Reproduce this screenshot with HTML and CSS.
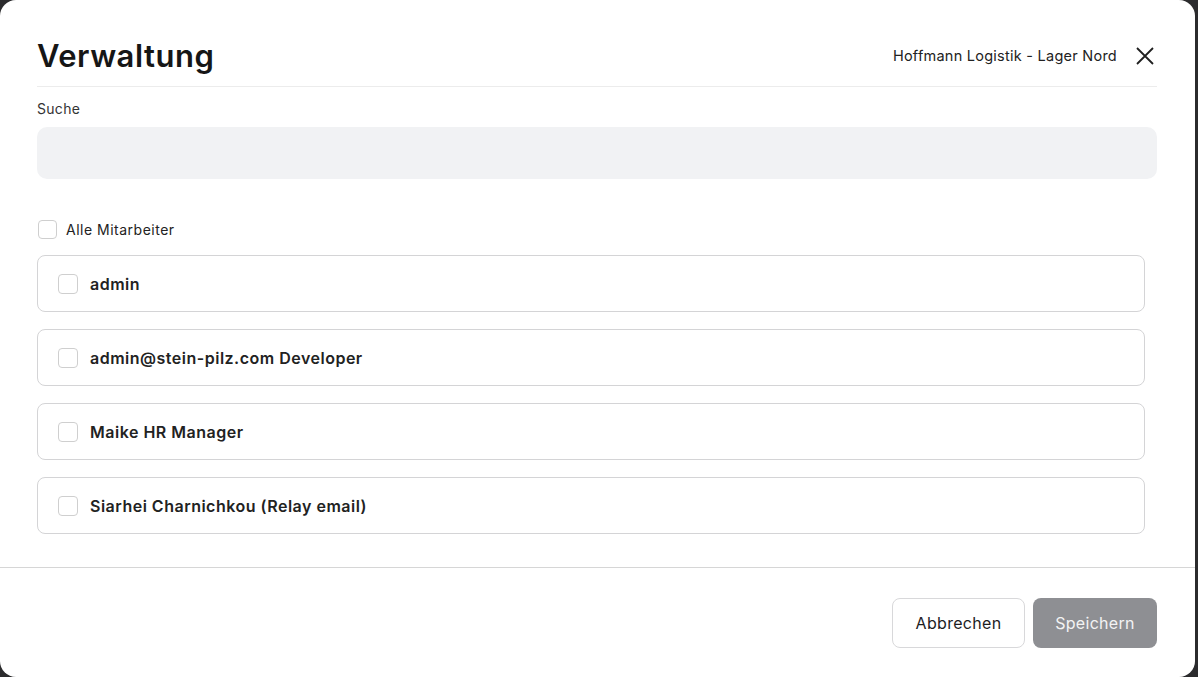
FILE: index.html
```html
<!DOCTYPE html>
<html lang="de">
<head>
<meta charset="UTF-8" />
<title>Verwaltung</title>
<link rel="stylesheet" href="styles.css">
</head>
<body>
<div class="modal">
  <header class="modal-head">
    <h1>Verwaltung</h1>
    <div class="head-right">
      <span class="company">Hoffmann Logistik - Lager Nord</span>
      <button class="close" aria-label="Schließen">
        <svg width="20" height="20" viewBox="0 0 20 20"><path d="M2 2 L18 18 M18 2 L2 18" stroke="#1f1f1f" stroke-width="1.8" fill="none"/></svg>
      </button>
    </div>
  </header>

  <div class="modal-body">
    <label class="field-label" for="search">Suche</label>
    <input id="search" class="search" type="text">

    <label class="all-check">
      <span class="box small"></span>
      Alle Mitarbeiter
    </label>

    <div class="list">
      <div class="item"><span class="box"></span>admin</div>
      <div class="item"><span class="box"></span>admin@stein-pilz.com Developer</div>
      <div class="item"><span class="box"></span>Maike HR Manager</div>
      <div class="item"><span class="box"></span>Siarhei Charnichkou (Relay email)</div>
    </div>
  </div>

  <footer class="modal-foot">
    <button class="btn btn-cancel">Abbrechen</button>
    <button class="btn btn-save" disabled>Speichern</button>
  </footer>
</div>
</body>
</html>
```

FILE: styles.css
```css
* {
  box-sizing: border-box;
}
body {
  margin: 0;
  background: #2b2b2d;
  font-family: Inter, "Open Sans", sans-serif;
  color: #1d1d1f;
  height: 677px;
  overflow: hidden;
}
.modal {
  width: 1195px;
  height: 677px;
  background: #fff;
  border-radius: 16px;
  display: flex;
  flex-direction: column;
}
.modal-head {
  margin: 0 38px 0 37px;
  height: 87px;
  padding-top: 25px;
  border-bottom: 1px solid #ececec;
  display: flex;
  align-items: center;
  justify-content: space-between;
}
.modal-head h1 {
  margin: 0;
  font-size: 31px;
  font-weight: 600;
  letter-spacing: 0.5px;
  color: #161616;
}
.head-right {
  display: flex;
  align-items: center;
  gap: 18px;
}
.company {
  font-size: 14.5px;
  letter-spacing: 0.25px;
  color: #222;
}
.close {
  border: none;
  background: none;
  padding: 0;
  margin-right: 2px;
  width: 20px;
  height: 20px;
  cursor: pointer;
  display: flex;
}
.modal-body {
  padding: 14px 38px 0 37px;
  flex: 1;
}
.field-label {
  display: block;
  font-size: 14px;
  letter-spacing: 0.3px;
  color: #333;
  line-height: 16px;
  margin-bottom: 10px;
}
.search {
  width: 100%;
  height: 52px;
  border: none;
  border-radius: 10px;
  background: #f1f2f4;
  outline: none;
  font: inherit;
  padding: 0 16px;
}
.all-check {
  display: flex;
  align-items: center;
  gap: 9px;
  font-size: 14px;
  letter-spacing: 0.5px;
  color: #222;
  margin-top: 41px;
  height: 18px;
}
.box {
  width: 20px;
  height: 20px;
  border: 1px solid #cfcfcf;
  border-radius: 4px;
  background: #fff;
  flex-shrink: 0;
}
.box.small {
  width: 19px;
  height: 19px;
  margin-left: 1px;
}
.list {
  margin-top: 17px;
  margin-right: 12px;
  display: flex;
  flex-direction: column;
  gap: 17px;
}
.item {
  height: 57px;
  border: 1px solid #d4d4d6;
  border-radius: 8px;
  display: flex;
  align-items: center;
  gap: 12px;
  padding-left: 20px;
  font-size: 16px;
  font-weight: 600;
  letter-spacing: 0.5px;
  color: #222;
}
.modal-foot {
  border-top: 1px solid #d6d6d6;
  height: 110px;
  padding: 0 38px 0 0;
  display: flex;
  align-items: center;
  justify-content: flex-end;
  gap: 8px;
}
.btn {
  height: 50px;
  border-radius: 8px;
  font-family: inherit;
  font-size: 16px;
  letter-spacing: 0.3px;
  cursor: pointer;
}
.btn-cancel {
  width: 133px;
  background: #fff;
  border: 1px solid #d8d8da;
  color: #1d1d1f;
}
.btn-save {
  width: 124px;
  background: #8e8f93;
  border: none;
  color: #f3f3f3;
}
```
